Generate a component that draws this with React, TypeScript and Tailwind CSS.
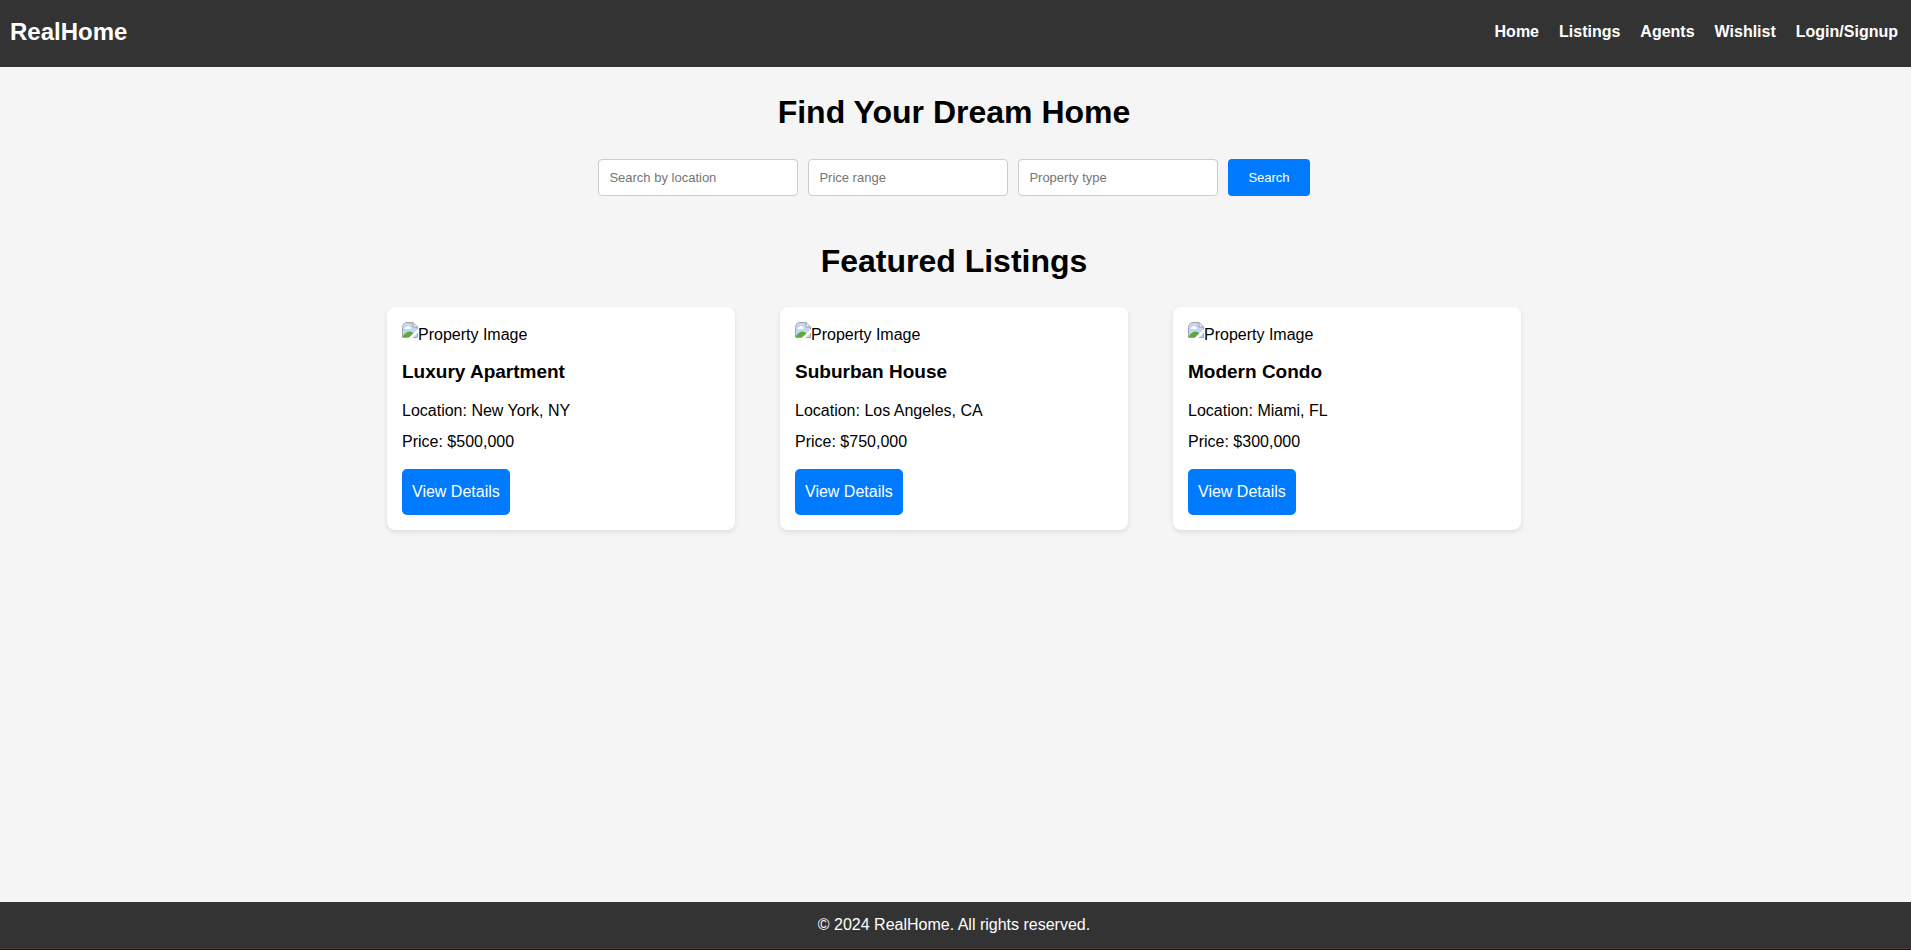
const navLinks = ['Home', 'Listings', 'Agents', 'Wishlist', 'Login/Signup'];

const searchFields = ['Search by location', 'Price range', 'Property type'];

const listings = [
  { title: 'Luxury Apartment', location: 'New York, NY', price: '$500,000' },
  { title: 'Suburban House', location: 'Los Angeles, CA', price: '$750,000' },
  { title: 'Modern Condo', location: 'Miami, FL', price: '$300,000' },
];

function PhotoIcon() {
  return (
    <svg width="16" height="16" viewBox="0 0 16 16" className="shrink-0" aria-hidden="true">
      <path d="M1 5Q1.500 1 5 1H10.500L15 5V16H1Z" fill="#c3d6f7" />
      <path d="M2.500 7Q2.500 5 4.500 5Q5.500 3 7.500 4.500Q9 5 8.500 7Z" fill="#fff" />
      <path d="M1 15.500V14Q4 9.500 7.500 9.500Q10 9.500 11.500 11.500V15.500Z" fill="#5aab3c" />
      <path d="M11 0.500V5H15.500Z" fill="#fff" stroke="#999" strokeWidth="1" />
      <path d="M0.500 15.500V5.500Q1 0.500 5 0.500H11" fill="none" stroke="#a3a3a3" strokeWidth="1" />
      <path d="M15.500 5V15.500H0.500" fill="none" stroke="#a3a3a3" strokeWidth="1" />
      <path d="M6.500 16L16 7V10.500L10.500 16Z" fill="#fff" />
    </svg>
  );
}

function ListingCard({ title, location, price }: (typeof listings)[number]) {
  return (
    <article className="rounded-lg bg-white p-[15px] shadow-[0_2px_5px_rgba(0,0,0,0.1)]">
      <div className="flex h-[26px]">
        <PhotoIcon />
        <span>Property Image</span>
      </div>
      <h3 className="mt-2 text-[19px] leading-8 font-bold">{title}</h3>
      <p className="mt-2.5 leading-[26px]">Location: {location}</p>
      <p className="mt-[5px] leading-[26px]">Price: {price}</p>
      <a
        href="#details"
        className="mt-3.5 inline-block rounded-[5px] bg-[#007bff] p-2.5 leading-[26px] text-white"
      >
        View Details
      </a>
    </article>
  );
}

export default function App() {
  return (
    <div className="flex min-h-screen flex-col bg-[#f5f5f5] font-['Liberation_Sans',Arial,sans-serif] text-base leading-[26px] text-black">
      <header className="flex justify-between bg-[#333] px-2.5 pt-[13px] pb-4 text-white">
        <a href="#home" className="text-2xl leading-[38px] font-bold">
          RealHome
        </a>
        <nav className="flex items-center gap-5 pr-[3px] font-bold">
          {navLinks.map((label) => (
            <a key={label} href="#nav">
              {label}
            </a>
          ))}
        </nav>
      </header>

      <main className="flex-1 pr-[3px]">
        <section className="flex flex-col items-center pt-5">
          <h1 className="text-[32px] leading-[50px] font-bold">Find Your Dream Home</h1>
          <form className="mt-[22px] flex gap-2.5 text-[13px]">
            {searchFields.map((label) => (
              <input
                key={label}
                type="text"
                aria-label={label}
                placeholder={label}
                className="h-[37px] w-[200px] rounded border border-[#ccc] bg-white px-2.5 placeholder:text-[#757575]"
              />
            ))}
            <button type="button" className="h-[37px] rounded bg-[#007bff] px-5 text-white">
              Search
            </button>
          </form>
        </section>

        <section className="flex flex-col items-center pt-10">
          <h2 className="text-[32px] leading-[50px] font-bold">Featured Listings</h2>
          <div className="mt-[21px] grid w-full max-w-[1134px] grid-cols-3 gap-[45px]">
            {listings.map((listing) => (
              <ListingCard key={listing.title} {...listing} />
            ))}
          </div>
        </section>
      </main>

      <div className="border-b border-[#23150f]">
        <footer className="border-b border-[#4a3a30] bg-[#333] pt-2.5 pr-[3px] pb-2.5 text-center text-white">
          © 2024 RealHome. All rights reserved.
        </footer>
      </div>
    </div>
  );
}
